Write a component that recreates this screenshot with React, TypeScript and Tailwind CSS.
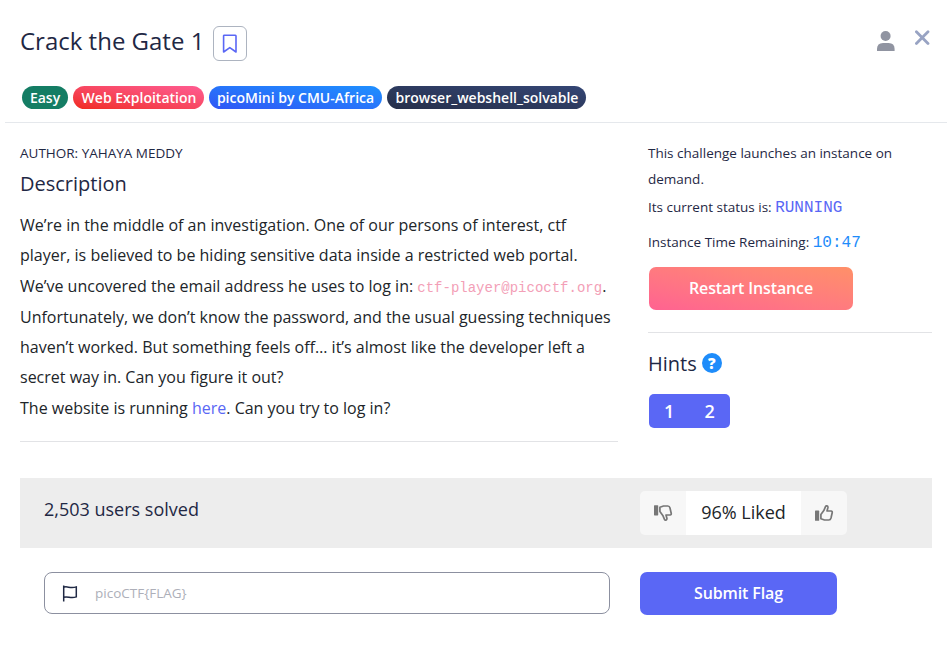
import React from "react";

function Tag({ className, children }: { className: string; children: React.ReactNode }) {
  return (
    <span className={`flex h-[23px] items-center justify-center rounded-full text-[14px] font-semibold whitespace-nowrap text-white ${className}`}>
      {children}
    </span>
  );
}

function Thumb({ className = "" }: { className?: string }) {
  return (
    <svg width="20" height="18" viewBox="0 0 20 18" className={className} fill="none" stroke="#777" strokeWidth="1.7" strokeLinejoin="round">
      <rect x="1" y="6.6" width="4.2" height="10.2" rx="0.6" fill="#777" stroke="none" />
      <path d="M6.9 10.6 L9.8 6.6 L11.6 2.4 Q12 1.6 12.9 1.9 Q14.2 2.4 13.9 3.8 L13 7 L17 7 Q18.5 7.3 18.2 8.7 L17 14 Q16.5 16 14.8 16 L10.5 16 L6.9 14.8 Z" />
    </svg>
  );
}

export default function App() {
  return (
    <div className="h-[648px] w-[952px] overflow-hidden bg-white font-['Open_Sans','Noto_Sans',sans-serif] text-[#1f2844]">
      <header className="mx-[5px] h-[123px] border-b border-[#e5e8ec] px-[15px] pt-[26px]">
        <div className="flex h-[35px] items-start">
          <h1 className="w-[193px] text-[24px] leading-[29px] whitespace-nowrap">Crack the Gate 1</h1>
          <button className="flex h-[35px] w-[34px] items-center justify-center rounded-[6px] border border-[#adb4c0]">
            <svg width="16" height="20" viewBox="0 0 16 20" fill="none" stroke="#5a67f5" strokeWidth="1.6" strokeLinejoin="round">
              <path d="M2 1.3 Q1.6 1.3 1.6 2 V18 L7.8 13.6 L14 18 V2 Q14 1.3 13.4 1.3 Z" />
            </svg>
          </button>
          <div className="ml-auto flex items-start gap-[20px] pr-[2px] pt-[4px]">
            <svg width="18" height="22" viewBox="0 0 18 22" fill="#9094a1" className="mt-[1px]">
              <circle cx="8.6" cy="5" r="5" />
              <path d="M0 20 V18 Q0 12 6 12 H11.6 Q17.6 12 17.6 18 V20 Z" />
            </svg>
            <svg width="15" height="15" viewBox="0 0 15 15" stroke="#98a3c3" strokeWidth="2.8" strokeLinecap="round">
              <path d="M1.4 1.8 L13 13.4 M13 1.8 L1.4 13.4" />
            </svg>
          </div>
        </div>
        <div className="mt-[25px] flex gap-[5px] pl-[2px]">
          <Tag className="w-[46px] bg-[#147d64]">Easy</Tag>
          <Tag className="w-[131px] bg-linear-to-tr from-[#f02819] to-[#ff5c93] pl-px">Web Exploitation</Tag>
          <Tag className="w-[173px] bg-linear-to-tr from-[#2f55f5] to-[#1e90ff]">picoMini by CMU-Africa</Tag>
          <Tag className="w-[199px] bg-linear-to-tr from-[#262f4a] to-[#344675] pl-px">browser_webshell_solvable</Tag>
        </div>
      </header>

      <main className="flex h-[355px] px-[20px]">
        <section className="w-[598px]">
          <p className="mt-[17px] text-[13.5px] leading-[26px]">AUTHOR: YAHAYA MEDDY</p>
          <h2 className="mt-[5px] text-[20px] leading-[26px]">Description</h2>
          <div className="mt-[13px] h-[232px] border-b border-[#e2e3e6] text-[16px] leading-[30.4px] whitespace-nowrap text-[#212529]">
            <p>
              We’re in the middle of an investigation. One of our persons of interest, ctf<br />
              player, is believed to be hiding sensitive data inside a restricted web portal.<br />
              We’ve uncovered the email address he uses to log in:{" "}
              <code className="font-['Liberation_Mono',monospace] text-[14px] leading-none text-[#f3a0b7]">ctf-player@picoctf.org</code>.
            </p>
            <p className="mt-[0.4px]">
              Unfortunately, we don’t know the password, and the usual guessing techniques<br />
              haven’t worked. But something feels off… it’s almost like the developer left a<br />
              secret way in. Can you figure it out?<br />
              The website is running <a className="text-[#5a67f5]">here</a>. Can you try to log in?
            </p>
          </div>
        </section>

        <aside className="ml-[30px] w-[284px]">
          <p className="mt-[17px] text-[13.5px] leading-[26px]">
            This challenge launches an instance on<br />demand.
          </p>
          <p className="mt-[2px] text-[13.5px] leading-[26px]">
            Its current status is: <span className="font-['Liberation_Mono',monospace] text-[16px] leading-none text-[#5a67f5]">RUNNING</span>
          </p>
          <p className="mt-[9px] text-[13.5px] leading-[26px]">
            Instance Time Remaining: <span className="font-['Liberation_Mono',monospace] text-[16px] leading-none text-[#1e8cfa]">10:47</span>
          </p>
          <button className="mt-[12px] ml-px block h-[43px] w-[204px] rounded-[7px] bg-linear-to-tr from-[#ff6291] to-[#ff9068] pb-[2px] text-[16px] font-semibold tracking-[-0.12px] text-white">
            Restart Instance
          </button>
          <hr className="mt-[22px] border-[#e2e3e6]" />
          <div className="mt-[17px] flex h-[28px] items-center gap-[5px]">
            <h2 className="text-[20px] leading-[28px]">Hints</h2>
            <span className="mb-[2px] flex size-[20px] items-center justify-center rounded-full bg-[#1e8cfa] text-[15px] leading-none font-extrabold text-white">?</span>
          </div>
          <div className="mt-[16px] ml-px flex h-[34px] w-[81px] items-center justify-around rounded-[5px] bg-[#5a67f5] text-[18px] font-semibold text-white">
            <span>1</span>
            <span>2</span>
          </div>
        </aside>
      </main>

      <section className="mx-[20px] flex h-[70px] bg-[#ededed] pl-[24px]">
        <p className="w-[596px] pt-[18px] text-[18px] leading-[26px]">2,503 users solved</p>
        <div className="mt-[13px] flex h-[44px] w-[207px] overflow-hidden rounded-[5px] bg-[#f7f7f7] text-[#212529]">
          <button className="flex w-[46px] items-center justify-center"><Thumb className="-scale-y-100" /></button>
          <span className="flex w-[115px] items-center justify-center bg-white pb-[2px] text-[18px] whitespace-nowrap">96% Liked</span>
          <button className="flex w-[46px] items-center justify-center"><Thumb /></button>
        </div>
      </section>

      <form className="flex px-[44px] pt-[24px]">
        <label className="mr-[30px] flex h-[42px] w-[566px] items-center rounded-[8px] border border-[#8c90a0] pl-[17px]">
          <svg width="16" height="17" viewBox="0 0 16 17" fill="none" stroke="#1f2844" strokeWidth="1.5">
            <path d="M1.7 0.5 V16.5 M1.7 2.2 C5.5 0.8 8 3.8 14.3 1.9 V11.9 C8.5 14 6 10.8 1.7 12.3" />
          </svg>
          <span className="ml-[17px] text-[13.5px] text-[#adafb9]">picoCTF&#123;FLAG&#125;</span>
        </label>
        <button type="button" className="h-[43px] w-[197px] rounded-[7px] bg-[#5a67f5] pb-[2px] text-[16px] font-semibold tracking-[-0.12px] text-white">Submit Flag</button>
      </form>
    </div>
  );
}
